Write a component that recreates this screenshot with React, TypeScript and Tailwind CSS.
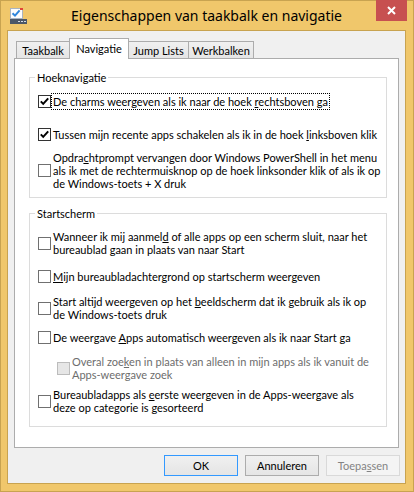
import React from 'react';
import clsx from 'clsx';

interface CheckBoxProps {
  checked?: boolean;
  disabled?: boolean;
}

const CheckBox: React.FC<CheckBoxProps> = ({ checked, disabled }) => (
  <span
    className={clsx(
      'flex h-[13px] w-[13px] shrink-0 items-center justify-center border',
      disabled
        ? 'border-[#bcbcbc] bg-[#e6e6e6]'
        : checked
          ? 'border-[#333333] bg-white'
          : 'border-[#707070] bg-white'
    )}
  >
    {checked && (
      <svg width="11" height="11" viewBox="0 0 11 11">
        <path
          d="M1.8 5.4 L4.2 7.9 L9.2 2.4"
          fill="none"
          stroke="#000"
          strokeWidth="2"
        />
      </svg>
    )}
  </span>
);

interface OptionProps {
  checked?: boolean;
  disabled?: boolean;
  focused?: boolean;
  lines: React.ReactNode[];
  className?: string;
}

const Option: React.FC<OptionProps> = ({
  checked,
  disabled,
  focused,
  lines,
  className,
}) => (
  <div className={clsx('flex items-center gap-[2px] pl-[8px]', className)}>
    <CheckBox checked={checked} disabled={disabled} />
    <div
      className={clsx(
        disabled ? 'text-[#6d6d6d]' : 'text-black',
        focused && 'outline-1 outline-offset-1 outline-dotted outline-black'
      )}
    >
      {lines.map((line, i) => (
        <div key={i} className="h-[13px] whitespace-nowrap leading-[13px]">
          {line}
        </div>
      ))}
    </div>
  </div>
);

const Tab: React.FC<{ label: string; width: string; selected?: boolean; first?: boolean }> = ({
  label,
  width,
  selected,
  first,
}) => (
  <div
    className={clsx(
      'flex items-center justify-center border-x border-t border-[#acacac] leading-[13px]',
      width,
      !first && '-ml-px',
      selected
        ? 'relative z-10 h-[21px] self-start bg-white pb-[2px]'
        : 'h-[17px] bg-gradient-to-b from-[#f0f0f0] to-[#e5e5e5]'
    )}
  >
    {label}
  </div>
);

const Button: React.FC<{ children: React.ReactNode; variant?: 'default' | 'normal' | 'disabled' }> = ({
  children,
  variant = 'normal',
}) => (
  <div
    className={clsx(
      'flex h-[21px] w-[74px] items-center justify-center border leading-[13px]',
      variant === 'default' && 'border-[#3399ff] bg-gradient-to-b from-[#f0f0f0] to-[#e5e5e5] text-black',
      variant === 'normal' && 'border-[#acacac] bg-gradient-to-b from-[#f0f0f0] to-[#e5e5e5] text-black',
      variant === 'disabled' && 'border-[#d9d9d9] bg-[#f4f4f4] text-[#838383]'
    )}
  >
    {children}
  </div>
);

const WindowIcon = () => (
  <svg width="17" height="16" viewBox="0 0 17 16">
    <rect x="0.5" y="0.5" width="12" height="10" fill="#fdfdfd" stroke="#a9b4c2" />
    <rect x="10" y="0" width="3" height="2" fill="#e0453a" />
    <path d="M2.5 5.2 L5 7.6 L9.6 2.4" fill="none" stroke="#2f86dc" strokeWidth="2" />
    <rect x="0" y="11" width="17" height="5" fill="#4c5868" />
    <rect x="8" y="13" width="2" height="1" fill="#d6dde5" />
    <rect x="11" y="13" width="2" height="1" fill="#d6dde5" />
    <rect x="14" y="13" width="2" height="1" fill="#d6dde5" />
  </svg>
);

export default function App() {
  return (
    <div className="relative flex h-[492px] w-[414px] flex-col border border-[#c8a350] bg-[#f0c76b] pb-[7px] pl-[6px] pr-[7px] font-['Lato',sans-serif] text-[11px] text-black">
      {/* title bar */}
      <div className="grid h-[29px] grid-cols-[30px_1fr_30px] items-center">
        <div className="pl-[3px] pt-px">
          <WindowIcon />
        </div>
        <div className="text-center font-['Noto_Sans',sans-serif] text-[14px] leading-[18px] text-black">
          Eigenschappen van taakbalk en navigatie
        </div>
        <div />
      </div>
      <div className="absolute left-[375px] top-[-1px] flex h-[21px] w-[31px] items-center justify-center bg-[#c75050]">
        <svg width="9" height="9" viewBox="0 0 9 9">
          <path d="M1 1 L8 8 M8 1 L1 8" stroke="#fff" strokeWidth="2" />
        </svg>
      </div>

      {/* client */}
      <div className="flex flex-1 flex-col border border-[#c8a350] bg-[#f0f0f0]">
        <div className="ml-[8px] mt-[7px] flex h-[20px] items-end">
          <Tab label="Taakbalk" width="w-[54px]" first />
          <Tab label="Navigatie" width="w-[60px]" selected />
          <Tab label="Jump Lists" width="w-[61px]" />
          <Tab label="Werkbalken" width="w-[66px]" />
        </div>

        <div className="mx-[6px] flex h-[390px] flex-col border border-[#acacac] bg-white">
          <fieldset className="ml-[14px] mr-[11px] mt-[12px] border border-[#dcdcdc] pb-[7px]">
            <legend className="ml-[5px] px-[2px] leading-[13px]">Hoeknavigatie</legend>
            <Option
              className="mt-[11px]"
              checked
              focused
              lines={[
                <>
                  De charms weergeven als ik naar de hoek <u>r</u>echtsboven ga
                </>,
              ]}
            />
            <Option
              className="mt-[20px]"
              checked
              lines={[
                <>
                  Tussen mijn recente apps schakelen als ik in de hoek <u>l</u>inksboven klik
                </>,
              ]}
            />
            <Option
              className="mt-[10px]"
              lines={[
                <>
                  Opdra<u>c</u>htprompt vervangen door Windows PowerShell in het menu
                </>,
                'als ik met de rechtermuisknop op de hoek linksonder klik of als ik op',
                'de Windows-toets + X druk',
              ]}
            />
          </fieldset>

          <fieldset className="ml-[14px] mr-[11px] mt-[9px] border border-[#dcdcdc] pb-[12px]">
            <legend className="ml-[5px] px-[2px] leading-[13px]">Startscherm</legend>
            <Option
              className="mt-[10px]"
              lines={[
                <>
                  Wanneer ik mij aanmel<u>d</u> of alle apps op een scherm sluit, naar het
                </>,
                'bureaublad gaan in plaats van naar Start',
              ]}
            />
            <Option
              className="mt-[14px]"
              lines={[
                <>
                  <u>M</u>ijn bureaubladachtergrond op startscherm weergeven
                </>,
              ]}
            />
            <Option
              className="mt-[12px]"
              lines={[
                <>
                  Start altijd weergeven op het <u>b</u>eeldscherm dat ik gebruik als ik op
                </>,
                'de Windows-toets druk',
              ]}
            />
            <Option
              className="mt-[10px]"
              lines={[
                <>
                  De weergave <u>A</u>pps automatisch weergeven als ik naar Start ga
                </>,
              ]}
            />
            <Option
              className="ml-[19px] mt-[11px]"
              disabled
              lines={[
                <>
                  Overal zoe<u>k</u>en in plaats van alleen in mijn apps als ik vanuit de
                </>,
                'Apps-weergave zoek',
              ]}
            />
            <Option
              className="mt-[7px]"
              lines={[
                <>
                  Bureaubladapps als <u>e</u>erste weergeven in de Apps-weergave als
                </>,
                'deze op categorie is gesorteerd',
              ]}
            />
          </fieldset>
        </div>

        <div className="mt-[7px] flex justify-end gap-[7px] pr-[5px]">
          <Button variant="default">OK</Button>
          <Button>Annuleren</Button>
          <Button variant="disabled">
            Toepa<u>s</u>sen
          </Button>
        </div>
      </div>
    </div>
  );
}
